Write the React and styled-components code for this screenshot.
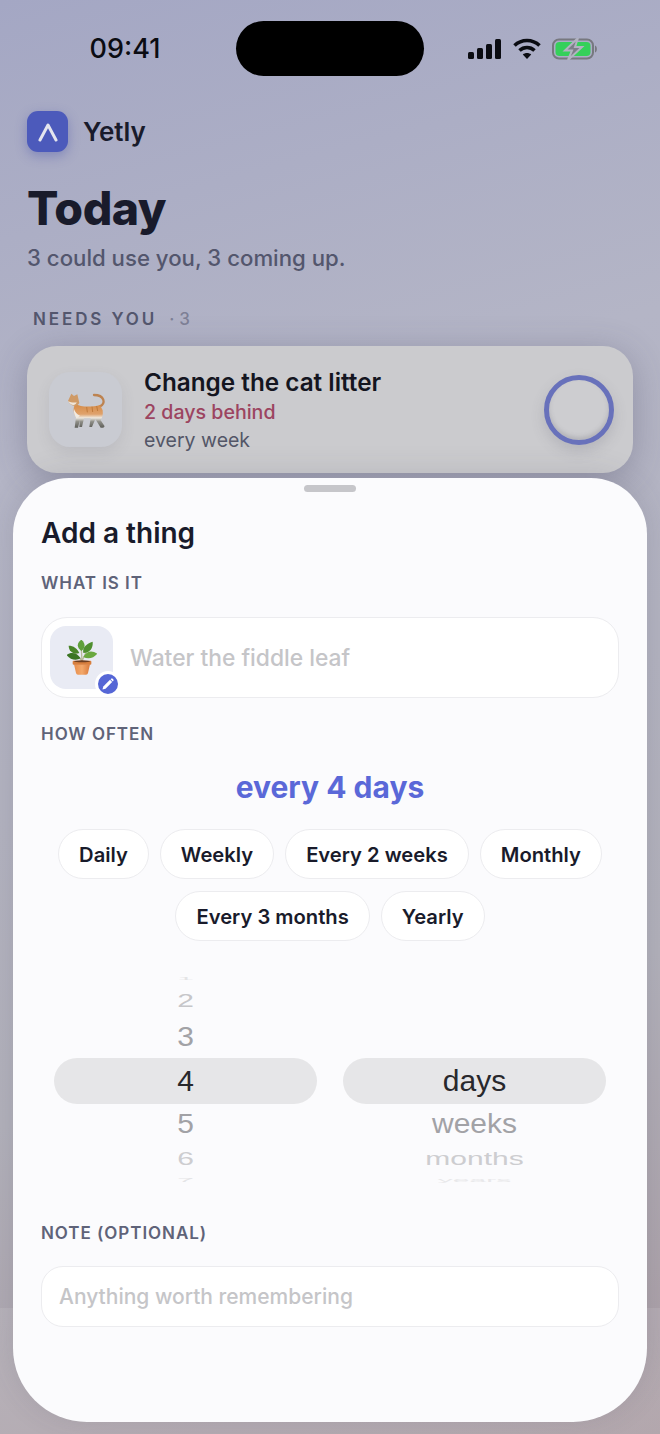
import React from 'react';
import styled, { createGlobalStyle } from 'styled-components';

const Global = createGlobalStyle`
  html, body { margin: 0; padding: 0; }
  body { font-family: Inter, "Liberation Sans", sans-serif; }
`;

const Screen = styled.div`
  position: relative;
  width: 660px;
  height: 1434px;
  overflow: hidden;
  background:
    linear-gradient(to bottom, transparent 1308px, rgba(255, 255, 255, 0.1) 1308px),
    linear-gradient(165deg, #a4a7c4 0%, #b4b5c6 30%, #b2b1bb 70%, #aa9da4 100%);
`;

const StatusBar = styled.div`
  display: grid;
  grid-template-columns: 236px 188px 236px;
  align-items: center;
  padding-top: 21px;
  height: 55px;
`;

const Time = styled.div`
  font-size: 27px;
  font-weight: 500;
  color: #0b0c12;
  text-align: center;
  padding-left: 14px;
`;

const Island = styled.div`
  height: 55px;
  border-radius: 28px;
  background: #000;
`;

const StatusIcons = styled.div`
  display: flex;
  align-items: center;
  gap: 11px;
  padding-left: 44px;
`;

const Content = styled.div`
  padding: 35px 27px 0;
`;

const Brand = styled.div`
  display: flex;
  align-items: center;
  gap: 15px;
`;

const BrandIcon = styled.div`
  width: 41px;
  height: 41px;
  border-radius: 11px;
  background: #4c5abb;
  box-shadow: 0 4px 12px rgba(70, 80, 170, 0.4);
  display: flex;
  align-items: center;
  justify-content: center;
`;

const BrandName = styled.div`
  font-size: 26px;
  font-weight: 600;
  color: #191b2b;
`;

const Heading = styled.h1`
  margin: 29px 0 0;
  font-size: 46.5px;
  line-height: 54px;
  font-weight: 800;
  color: #191b2b;
  letter-spacing: -0.5px;
`;

const Subtitle = styled.div`
  margin-top: 9px;
  font-size: 22.2px;
  line-height: 28px;
  font-weight: 500;
  color: #53566d;
`;

const SectionLabel = styled.div`
  margin: 36px 0 0 6px;
  font-size: 17px;
  line-height: 22px;
  font-weight: 600;
  letter-spacing: 2.9px;
  color: #53566d;
  display: flex;
  gap: 12px;
`;

const SectionCount = styled.span`
  color: #7d7f95;
  font-weight: 500;
  letter-spacing: 5px;
`;

const Card = styled.div`
  margin-top: 16px;
  height: 127px;
  border-radius: 30px;
  background: #cbcbce;
  box-shadow: 0 6px 34px rgba(60, 60, 90, 0.3);
  display: flex;
  align-items: center;
  padding: 0 19px 0 22px;
`;

const CardTile = styled.div`
  width: 73px;
  height: 75px;
  border-radius: 21px;
  background: #c9cbd2;
  box-shadow: 0 6px 14px rgba(90, 90, 110, 0.12);
  display: flex;
  align-items: center;
  justify-content: center;
`;

const CardBody = styled.div`
  flex: 1;
  margin-left: 22px;
`;

const CardTitle = styled.div`
  font-size: 24.3px;
  line-height: 32px;
  font-weight: 600;
  color: #14151f;
`;

const CardBehind = styled.div`
  font-size: 19.6px;
  line-height: 28px;
  font-weight: 500;
  color: #9c4460;
`;

const CardFreq = styled.div`
  font-size: 19.5px;
  line-height: 28px;
  color: #535667;
`;

const Ring = styled.div`
  width: 70px;
  height: 70px;
  box-sizing: border-box;
  border-radius: 50%;
  border: 5px solid #6871bb;
  background: #cdcdd0;
  box-shadow: inset 0 -3px 4px rgba(120, 120, 130, 0.3), 0 6px 14px rgba(90, 90, 110, 0.2);
`;

const Sheet = styled.div`
  position: absolute;
  left: 13px;
  top: 478px;
  width: 634px;
  height: 944px;
  box-sizing: border-box;
  padding: 0 28px;
  border-radius: 56px 56px 74px 74px;
  background: #fbfbfd;
  box-shadow: 0 -4px 30px rgba(60, 60, 80, 0.15);
`;

const Handle = styled.div`
  width: 52px;
  height: 7px;
  margin: 7px auto 0;
  border-radius: 4px;
  background: #c6c6ca;
`;

const SheetTitle = styled.div`
  margin-top: 23px;
  font-size: 28px;
  line-height: 36px;
  font-weight: 600;
  color: #191b2b;
`;

const FieldLabel = styled.div`
  margin-top: ${(p) => p.$top}px;
  font-size: 17px;
  line-height: 22px;
  font-weight: 600;
  letter-spacing: 0.95px;
  color: #5f6379;
`;

const NameField = styled.div`
  margin-top: 23px;
  height: 81px;
  box-sizing: border-box;
  border: 1px solid #ececef;
  border-radius: 26px;
  background: #fff;
  display: flex;
  align-items: center;
  gap: 17px;
  padding-left: 8px;
`;

const EmojiTile = styled.div`
  position: relative;
  width: 63px;
  height: 63px;
  border-radius: 16px;
  background: #e9ebf4;
  display: flex;
  align-items: center;
  justify-content: center;
`;

const EditBadge = styled.div`
  position: absolute;
  right: -8px;
  bottom: -8px;
  width: 20px;
  height: 20px;
  border-radius: 50%;
  border: 3px solid #fff;
  background: #5566d6;
  display: flex;
  align-items: center;
  justify-content: center;
`;

const Placeholder = styled.div`
  font-size: ${(p) => p.$size}px;
  font-weight: 500;
  color: #c5c5c8;
`;

const Frequency = styled.div`
  margin-top: 22px;
  text-align: center;
  font-size: 30px;
  line-height: 40px;
  font-weight: 700;
  color: #5a68d8;
`;

const Chips = styled.div`
  margin-top: 22px;
  display: flex;
  flex-wrap: wrap;
  justify-content: center;
  gap: 12px 11px;
`;

const Chip = styled.div`
  height: 50px;
  box-sizing: border-box;
  padding: 0 20px;
  border: 1px solid #ececef;
  border-radius: 25px;
  background: #fff;
  display: flex;
  align-items: center;
  font-size: 20.2px;
  font-weight: 600;
  color: #191b2b;
`;

const Wheels = styled.div`
  margin: 31px 13px 0;
  display: grid;
  grid-template-columns: 263px 263px;
  column-gap: 26px;
`;

const Wheel = styled.div`
  display: flex;
  flex-direction: column;
`;

const WheelRow = styled.div`
  height: ${(p) => p.$height}px;
  display: flex;
  align-items: center;
  justify-content: center;
  overflow: hidden;
`;

const WheelCurrent = styled(WheelRow)`
  border-radius: 23px;
  background: #e6e6e8;
`;

const WheelText = styled.span`
  display: block;
  font-family: "Liberation Sans", Arial, sans-serif;
  font-size: 30px;
  line-height: 36px;
  color: ${(p) => p.$color};
  transform: scaleY(${(p) => p.$scale});
`;

const NoteField = styled.div`
  margin-top: 22px;
  height: 61px;
  box-sizing: border-box;
  border: 1px solid #ececef;
  border-radius: 22px;
  background: #fff;
  display: flex;
  align-items: center;
  padding-left: 17px;
`;

const Signal = () => (
  <svg width="34" height="20" viewBox="0 0 34 20">
    <rect x="0" y="13" width="6" height="7" rx="1.5" fill="#0b0c12" />
    <rect x="9" y="9" width="6" height="11" rx="1.5" fill="#0b0c12" />
    <rect x="18" y="5" width="6" height="15" rx="1.5" fill="#0b0c12" />
    <rect x="27" y="0" width="6" height="20" rx="1.5" fill="#0b0c12" />
  </svg>
);

const Wifi = () => (
  <svg width="28" height="22" viewBox="0 0 28 22" fill="none" stroke="#0b0c12" strokeWidth="3.6">
    <path d="M1.5 7.5C8.5 .8 19.5 .8 26.5 7.5" />
    <path d="M6.5 12.5c4.3 -4 10.7 -4 15 0" />
    <path d="M14 21l-4.2 -4.6c2.4 -2 6 -2 8.4 0z" fill="#0b0c12" stroke="none" />
  </svg>
);

const Battery = () => (
  <svg width="46" height="22" viewBox="0 0 46 22">
    <rect x="1" y="1.500" width="40" height="19" rx="6" fill="none" stroke="#77787f" strokeWidth="2" />
    <rect x="3.500" y="4" width="35" height="14" rx="4" fill="#35d05a" />
    <path d="M43 7.500c2.500 .6 2.500 6.400 0 7z" fill="#77787f" />
    <path d="M26 0L13 12.500h7L16 22l14 -13h-7z" fill="#7d7e88" stroke="#b2b3c1" strokeWidth="2" />
  </svg>
);

const Logo = () => (
  <svg width="22" height="20" viewBox="0 0 22 20" fill="none" stroke="#e4e5ee" strokeWidth="3" strokeLinecap="round" strokeLinejoin="round">
    <path d="M3 18L11 3l8 15" />
  </svg>
);

const Pencil = () => (
  <svg width="14" height="14" viewBox="0 0 14 14" fill="#fff">
    <path d="M1.500 12.500l.8 -3L9 2.800l2.200 2.200L4.500 11.700z" />
    <path d="M10 1.800c.5 -.5 1.200 -.5 1.700 0l.5 .5c.5 .5 .5 1.200 0 1.700l-.4 .4L9.600 2.200z" />
  </svg>
);

const Cat = () => (
  <svg width="60" height="50" viewBox="0 0 180 150">
    <defs>
      <linearGradient id="catFur" gradientUnits="userSpaceOnUse" x1="0" y1="58" x2="0" y2="128">
        <stop offset="0" stopColor="#d68c48" />
        <stop offset="0.42" stopColor="#dfa26c" />
        <stop offset="0.58" stopColor="#eee9e0" />
        <stop offset="0.74" stopColor="#8f8f88" />
        <stop offset="1" stopColor="#5f5f5a" />
      </linearGradient>
    </defs>
    <path d="M132 64C150 56 146 30 114 30" fill="none" stroke="#bd8350" strokeWidth="7" strokeLinecap="round" />
    <path d="M58 56C75 68 110 66 132 60L140 76C142 90 138 100 134 106L146 124L142 128L134 128L118 102L108 126L100 126L104 100C96 100 90 100 84 100L78 126L70 126L72 104L66 128L56 128L60 96C52 84 50 70 58 56Z" fill="url(#catFur)" />
    <path d="M36 48L46 26L54 33L64 28L70 54C62 68 44 64 36 48Z" fill="#cf9a66" />
    <path d="M36 48C44 52 52 54 62 52C58 64 44 62 36 48Z" fill="#efe6da" />
    <path d="M54 72C58 82 62 88 72 92L62 100C56 92 52 82 54 72Z" fill="#f1ebe2" />
    <path d="M92 66l2 16M108 65l2 16M122 63l3 15" stroke="#c07a3c" strokeWidth="3" fill="none" />
  </svg>
);

const Plant = () => (
  <svg width="30" height="35" viewBox="33 25 90 105">
    <defs>
      <linearGradient id="potClay" x1="0" y1="0" x2="1" y2="0">
        <stop offset="0" stopColor="#e88e4c" />
        <stop offset="0.5" stopColor="#f3a86a" />
        <stop offset="1" stopColor="#d9793a" />
      </linearGradient>
    </defs>
    <path d="M78 90L76 50M78 88L92 58M78 88L56 62" stroke="#b8b89a" strokeWidth="4" fill="none" />
    <path d="M76 58C60 46 64 32 76 24C88 34 90 48 76 58Z" fill="#5fa03a" />
    <path d="M82 64C78 46 92 36 110 30C112 48 102 64 82 64Z" fill="#4f8f2f" />
    <path d="M82 76C90 58 108 54 124 66C114 80 96 84 82 76Z" fill="#6aa83f" />
    <path d="M70 64C64 50 52 42 38 42C38 58 52 70 70 64Z" fill="#4a8529" />
    <path d="M74 80C62 62 44 60 32 70C42 84 60 88 74 80Z" fill="#3b7523" />
    <path d="M54 98H102L96 124Q95 129 90 129H66Q61 129 60 124Z" fill="url(#potClay)" />
    <rect x="50" y="87" width="56" height="12" rx="3" fill="#d87f3e" />
    <ellipse cx="78" cy="89" rx="24" ry="3" fill="#6b3d20" />
  </svg>
);

const numbers = [
  { label: '1', height: 14, scale: 0.12, color: '#e4e4e6' },
  { label: '2', height: 30, scale: 0.6, color: '#c6c6c9' },
  { label: '3', height: 42, scale: 0.9, color: '#a2a2a6' },
  { label: '4', height: 46, current: true, color: '#28282c' },
  { label: '5', height: 40, scale: 0.9, color: '#a2a2a6' },
  { label: '6', height: 30, scale: 0.6, color: '#cdcdd0' },
  { label: '7', height: 12, scale: 0.15, color: '#e4e4e6' },
];

const units = [
  { label: '', height: 14 },
  { label: '', height: 30 },
  { label: '', height: 42 },
  { label: 'days', height: 46, current: true, color: '#28282c' },
  { label: 'weeks', height: 40, scale: 0.9, color: '#a2a2a6' },
  { label: 'months', height: 30, scale: 0.6, color: '#cdcdd0' },
  { label: 'years', height: 12, scale: 0.15, color: '#e8e8ea' },
];

const presets = ['Daily', 'Weekly', 'Every 2 weeks', 'Monthly', 'Every 3 months', 'Yearly'];

const PickerColumn = ({ rows }) => (
  <Wheel>
    {rows.map((row, i) => {
      const Row = row.current ? WheelCurrent : WheelRow;
      return (
        <Row key={i} $height={row.height}>
          <WheelText $color={row.color} $scale={row.scale || 1}>{row.label}</WheelText>
        </Row>
      );
    })}
  </Wheel>
);

const App = () => (
  <Screen>
    <Global />
    <StatusBar>
      <Time>09:41</Time>
      <Island />
      <StatusIcons>
        <Signal />
        <Wifi />
        <Battery />
      </StatusIcons>
    </StatusBar>
    <Content>
      <Brand>
        <BrandIcon><Logo /></BrandIcon>
        <BrandName>Yetly</BrandName>
      </Brand>
      <Heading>Today</Heading>
      <Subtitle>3 could use you, 3 coming up.</Subtitle>
      <SectionLabel>NEEDS YOU <SectionCount>·3</SectionCount></SectionLabel>
      <Card>
        <CardTile><Cat /></CardTile>
        <CardBody>
          <CardTitle>Change the cat litter</CardTitle>
          <CardBehind>2 days behind</CardBehind>
          <CardFreq>every week</CardFreq>
        </CardBody>
        <Ring />
      </Card>
    </Content>
    <Sheet>
      <Handle />
      <SheetTitle>Add a thing</SheetTitle>
      <FieldLabel $top={21}>WHAT IS IT</FieldLabel>
      <NameField>
        <EmojiTile>
          <Plant />
          <EditBadge><Pencil /></EditBadge>
        </EmojiTile>
        <Placeholder $size={22.8}>Water the fiddle leaf</Placeholder>
      </NameField>
      <FieldLabel $top={25}>HOW OFTEN</FieldLabel>
      <Frequency>every 4 days</Frequency>
      <Chips>
        {presets.map((p) => <Chip key={p}>{p}</Chip>)}
      </Chips>
      <Wheels>
        <PickerColumn rows={numbers} />
        <PickerColumn rows={units} />
      </Wheels>
      <FieldLabel $top={36}>NOTE (OPTIONAL)</FieldLabel>
      <NoteField>
        <Placeholder $size={21}>Anything worth remembering</Placeholder>
      </NoteField>
    </Sheet>
  </Screen>
);

export default App;
